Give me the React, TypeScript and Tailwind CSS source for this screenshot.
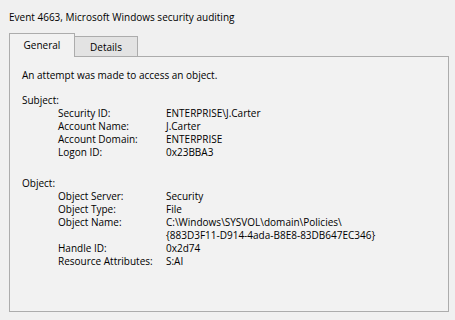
import React from 'react'

const subject: [string, string][] = [
  ['Security ID:', 'ENTERPRISE\\J.Carter'],
  ['Account Name:', 'J.Carter'],
  ['Account Domain:', 'ENTERPRISE'],
  ['Logon ID:', '0x23BBA3'],
]

const object: [string, string[]][] = [
  ['Object Server:', ['Security']],
  ['Object Type:', ['File']],
  ['Object Name:', ['C:\\Windows\\SYSVOL\\domain\\Policies\\', '{883D3F11-D914-4ada-B8E8-83DB647EC346}']],
  ['Handle ID:', ['0x2d74']],
  ['Resource Attributes:', ['S:AI']],
]

function Row({ label, lines }: { label: string; lines: string[] }) {
  return (
    <div className="flex">
      <div className="w-[144px] pl-[36px] shrink-0">{label}</div>
      <div>
        {lines.map((l) => (
          <div key={l}>{l}</div>
        ))}
      </div>
    </div>
  )
}

export default function App() {
  return (
    <div
      className="w-[455px] h-[320px] bg-[#f0f0f0] text-[#000] text-[10px] leading-[13px] pt-[11px] px-[9px]"
      style={{ fontFamily: '"Open Sans", "Noto Sans", sans-serif' }}
    >
      <div className="h-[22px]">Event 4663, Microsoft Windows security auditing</div>

      {/* Tabs */}
      <div className="flex items-end h-[23px] relative z-10">
        <div className="w-[66px] h-[24px] -mb-px border border-b-0 border-[#acacac] bg-[#f2f2f2] flex items-center justify-center pb-[1px]">
          General
        </div>
        <div className="w-[63px] h-[20px] border border-l-0 border-b-0 border-[#acacac] bg-[#e3e3e3] flex items-center justify-center pt-[2px]">
          Details
        </div>
      </div>

      {/* Panel */}
      <div className="w-[440px] h-[256px] border border-[#acacac] bg-[#f2f2f2] pl-[12px] pt-[12px]">
        <div>An attempt was made to access an object.</div>
        <div className="mt-[12px]">Subject:</div>
        {subject.map(([k, v]) => (
          <Row key={k} label={k} lines={[v]} />
        ))}
        <div className="mt-[18px]">Object:</div>
        {object.map(([k, v]) => (
          <Row key={k} label={k} lines={v} />
        ))}
      </div>
    </div>
  )
}
